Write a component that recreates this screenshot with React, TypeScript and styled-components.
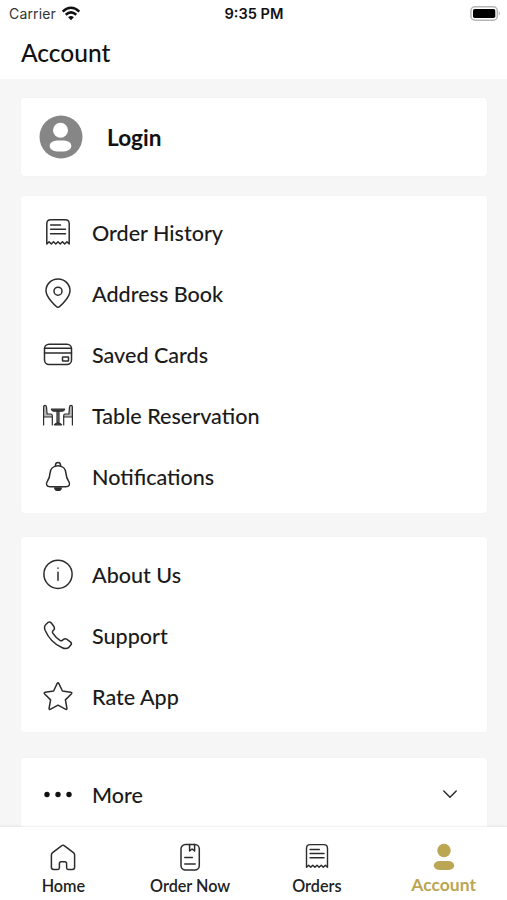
import React from 'react';
import styled, { createGlobalStyle } from 'styled-components';

const GlobalStyle = createGlobalStyle`
  *, *::before, *::after { box-sizing: border-box; }
  body { margin: 0; background: #f6f6f6; font-family: Lato, "Liberation Sans", sans-serif; color: #1b1b1b; }
`;

const Screen = styled.div`
  width: 507px;
  height: 900px;
  display: flex;
  flex-direction: column;
  overflow: hidden;
  background: #f6f6f6;
`;

const StatusBar = styled.div`
  display: grid;
  grid-template-columns: 1fr auto 1fr;
  align-items: center;
  height: 27px;
  flex: none;
  padding: 0 6px 0 9px;
  background: #fff;
  font-family: Inter, "Liberation Sans", sans-serif;
`;

const Carrier = styled.div`
  display: flex;
  align-items: center;
  gap: 5px;
  font-size: 14px;
  letter-spacing: 0.15px;
  color: #333;
`;

const Clock = styled.div`
  margin-right: 2px;
  font-size: 14.6px;
  font-weight: 600;
  color: #111;
`;

const BatterySlot = styled.div`
  display: flex;
  justify-content: flex-end;
`;

const Header = styled.header`
  flex: none;
  height: 52px;
  padding: 9px 21px 0;
  background: #fff;
`;

const Title = styled.h1`
  margin: 0;
  font-size: 24.5px;
  line-height: 34px;
  font-weight: 500;
  color: #111;
`;

const Content = styled.main`
  flex: 1;
  min-height: 0;
  overflow: hidden;
  padding: 19px 20px 0 21px;
`;

const Card = styled.section<{ $pad: string; $gap: number }>`
  padding: ${(p) => p.$pad};
  margin-bottom: ${(p) => p.$gap}px;
  background: #fff;
  border-radius: 4px;
  box-shadow: 0 0 3px rgba(0, 0, 0, 0.025);
`;

const LoginRow = styled.div`
  display: flex;
  align-items: center;
  gap: 24px;
  height: 78px;
  padding-left: 18px;
`;

const LoginLabel = styled.span`
  padding-top: 2px;
  font-size: 22.6px;
  font-weight: 700;
  line-height: 30px;
  color: #111;
`;

const Row = styled.div`
  display: flex;
  align-items: center;
  height: 61px;
  padding: 0 29px 0 21px;
`;

const RowLabel = styled.span`
  flex: 1;
  margin-left: 18px;
  font-size: 21.55px;
  font-weight: 500;
  line-height: 30px;
`;

const Icon = styled.svg`
  display: block;
  flex: none;
  overflow: visible;
  fill: none;
  stroke: #2c2c2c;
  stroke-width: 1.5;
  stroke-linecap: round;
  stroke-linejoin: round;
`;

const TabBar = styled.nav`
  flex: none;
  display: grid;
  grid-template-columns: repeat(4, 1fr);
  height: 73px;
  background: #fff;
  box-shadow: 0 -1px 2px rgba(0, 0, 0, 0.07);
`;

const Tab = styled.div<{ $active?: boolean }>`
  display: flex;
  flex-direction: column;
  align-items: center;
  padding-top: 14px;
  font-size: ${(p) => (p.$active ? 17.5 : 16.2)}px;
  font-weight: ${(p) => (p.$active ? 700 : 600)};
  line-height: 20px;
  color: ${(p) => (p.$active ? '#baa653' : '#222')};
`;

const TabIcon = styled.div`
  display: flex;
  align-items: center;
  justify-content: center;
  height: 32px;
`;

const TabLabel = styled.span<{ $active?: boolean }>`
  margin-top: ${(p) => (p.$active ? 2 : 3)}px;
`;

const Receipt = ({ size = 32 }: { size?: number }) => (
  <Icon width={size} height={size} viewBox="0 0 32 32">
    <path d="M4.8 27V6.8Q4.8 2.8 8.8 2.8H23.2Q27.2 2.8 27.2 6.8V27L24.9 24.7L22.7 27L20.5 24.7L18.2 27L16 24.7L13.8 27L11.5 24.7L9.3 27L7.1 24.7Z" />
    <path d="M8.6 8H18.5M8.6 12.3H23.5M8.6 16.8H23.5" />
  </Icon>
);

const Pin = () => (
  <Icon width="32" height="32" viewBox="0 0 32 32">
    <path d="M16 29.3C14.5 29.3 4 19.5 4 12.7A12 11.8 0 0 1 28 12.7C28 19.5 17.5 29.3 16 29.3Z" />
    <circle cx="16" cy="13.2" r="4" />
  </Icon>
);

const CreditCard = () => (
  <Icon width="32" height="32" viewBox="0 0 32 32">
    <rect x="2.5" y="5.2" width="27" height="20.4" rx="4.5" />
    <path d="M2.5 9.3H29.5M2.5 14H29.5" />
    <rect x="20.5" y="18" width="6" height="4" rx="0.5" />
  </Icon>
);

const TableChairs = () => (
  <Icon width="32" height="32" viewBox="0 0 32 32">
    <g strokeWidth="1.2">
      <path d="M1.6 17V7Q1.6 5.4 3 5.4Q4.3 5.4 4.5 7L5.1 14H8.8Q10.3 14 10.3 15.8V17Z" fill="#bbb" />
      <path d="M1.6 17V25M10.3 17V25" />
      <path d="M30.4 17V7Q30.4 5.4 29 5.4Q27.7 5.4 27.5 7L26.9 14H23.2Q21.7 14 21.7 15.8V17Z" fill="#bbb" />
      <path d="M30.4 17V25M21.7 17V25" />
      <path d="M9.4 9.2H22.6Q22.2 11.2 20.4 11.2H11.6Q9.8 11.2 9.4 9.2Z" fill="#444" />
      <path d="M15 11.5H17V22.8H15Z" fill="#888" />
      <path d="M12.4 24.8Q13.5 23 16 23Q18.5 23 19.6 24.8Z" fill="#444" />
    </g>
  </Icon>
);

const Bell = () => (
  <Icon width="32" height="32" viewBox="0 0 32 32">
    <path d="M13.5 5.3V3.9Q13.7 1.6 16 1.6Q18.3 1.6 18.5 3.9V5.3" />
    <path d="M16 4.8C10.9 4.8 8.2 8.4 8 12.4C7.7 17.2 6.9 18.2 5.3 20.4C3.4 23.3 4.6 25.6 8.3 25.7H23.7C27.4 25.6 28.6 23.3 26.7 20.4C25.1 18.2 24.3 17.2 24 12.4C23.8 8.4 21.1 4.8 16 4.8Z" />
    <path d="M12.8 27H19.2Q18.7 29.3 16 29.3Q13.3 29.3 12.8 27Z" fill="#222" />
  </Icon>
);

const Info = () => (
  <Icon width="32" height="32" viewBox="0 0 32 32">
    <circle cx="16" cy="15.3" r="14.1" />
    <path d="M16 13.2V21.3M16 9V9.3" />
  </Icon>
);

const Phone = () => (
  <Icon width="32" height="32" viewBox="0 0 32 32">
    <path d="M4.1 4.2L6 2.5Q7.8 1.2 9.3 3L12.1 6.8Q13 8.5 11.7 10L10.7 11.1Q10.1 12 10.8 13.2Q13.6 17.7 18.3 20.6Q19.4 21.2 20.3 20.4L21.5 19.4Q23 18.2 24.6 19.2L28.4 21.9Q30.2 23.4 28.8 25.1L27.1 27.1Q24.4 29.6 20.3 27.7Q8.5 22.7 3.1 10.2Q1.6 6.4 4.1 4.2Z" />
  </Icon>
);

const Star = () => (
  <Icon width="32" height="32" viewBox="0 0 32 32">
    <path d="M15.1 2.6Q16 .9 16.9 2.6L20.4 10L28.7 11.2Q30.6 11.6 29.3 13L23.4 18.9L24.9 27.2Q25.1 29.1 23.4 28.2L16 24.2L8.6 28.2Q6.9 29.1 7.1 27.2L8.6 18.9L2.7 13Q1.4 11.6 3.3 11.2L11.6 10Z" />
  </Icon>
);

const Dots = () => (
  <Icon width="32" height="32" viewBox="0 0 32 32">
    <g fill="#111" stroke="none">
      <circle cx="5" cy="15.5" r="2.7" />
      <circle cx="16" cy="15.5" r="2.7" />
      <circle cx="27" cy="15.5" r="2.7" />
    </g>
  </Icon>
);

const Chevron = () => (
  <Icon width="16" height="16" viewBox="0 0 16 16">
    <path d="M1.8 4L8 10.3L14.2 4" />
  </Icon>
);

const Home = () => (
  <Icon width="32" height="32" viewBox="0 0 32 32">
    <path d="M16 4.2Q16.8 4.2 17.5 4.8L26.4 11.6Q27.6 12.6 27.6 14V26.2Q27.6 28.4 25.4 28.4H21.2Q19.6 28.4 19.6 26.8V22.8Q19.6 20.8 17.8 20.8H14.2Q12.4 20.8 12.4 22.8V26.8Q12.4 28.4 10.8 28.4H6.6Q4.4 28.4 4.4 26.2V14Q4.4 12.6 5.6 11.6L14.5 4.8Q15.2 4.2 16 4.2Z" />
  </Icon>
);

const Menu = () => (
  <Icon width="32" height="32" viewBox="0 0 32 32">
    <rect x="7" y="3.5" width="18.3" height="25.6" rx="4.5" />
    <path d="M15.6 3.6V10L18.1 8L20.6 10V3.6M10.8 16.6H18.4M10.8 23H21.2" />
  </Icon>
);

const Person = () => (
  <Icon width="32" height="32" viewBox="0 0 32 32">
    <g fill="#baa653" stroke="none">
      <circle cx="16" cy="9.5" r="6.7" />
      <rect x="5.8" y="20" width="20.4" height="9" rx="6" ry="4.5" />
    </g>
  </Icon>
);

const Avatar = () => (
  <Icon width="44" height="44" viewBox="0 0 44 44">
    <g stroke="none">
      <circle cx="22" cy="22" r="21.5" fill="#868686" />
      <circle cx="21.5" cy="15.3" r="7.5" fill="#fff" />
      <rect x="10.6" y="25.4" width="21.8" height="11" rx="7.5" ry="5.5" fill="#fff" />
    </g>
  </Icon>
);

const Wifi = () => (
  <svg width="20" height="15" viewBox="0 0 20 15" fill="none" stroke="#111" strokeWidth="2.5">
    <path d="M1.7 5.6Q10 -2 18.3 5.6M4.7 8.8Q10 4 15.3 8.8" />
    <path d="M10 14.2L7.1 11.3Q10 8.9 12.9 11.3Z" fill="#111" stroke="none" />
  </svg>
);

const Battery = () => (
  <svg width="31" height="15" viewBox="0 0 31 15">
    <rect x="0.9" y="0.8" width="26.4" height="13.4" rx="4" fill="#fff" stroke="#b5b5b5" strokeWidth="1.5" />
    <rect x="3" y="2.9" width="22.3" height="9.2" rx="1.8" fill="#000" />
    <path d="M28.8 5Q31 7.4 28.8 9.8Z" fill="#b5b5b5" />
  </svg>
);

const orderItems = [
  { label: 'Order History', icon: <Receipt /> },
  { label: 'Address Book', icon: <Pin /> },
  { label: 'Saved Cards', icon: <CreditCard /> },
  { label: 'Table Reservation', icon: <TableChairs /> },
  { label: 'Notifications', icon: <Bell /> },
];

const infoItems = [
  { label: 'About Us', icon: <Info /> },
  { label: 'Support', icon: <Phone /> },
  { label: 'Rate App', icon: <Star /> },
];

const tabs = [
  { label: 'Home', icon: <Home /> },
  { label: 'Order Now', icon: <Menu /> },
  { label: 'Orders', icon: <Receipt size={30} /> },
  { label: 'Account', icon: <Person />, active: true },
];

export default function App() {
  return (
    <Screen>
      <GlobalStyle />
      <StatusBar>
        <Carrier>Carrier <Wifi /></Carrier>
        <Clock>9:35 PM</Clock>
        <BatterySlot><Battery /></BatterySlot>
      </StatusBar>
      <Header><Title>Account</Title></Header>
      <Content>
        <Card $pad="0" $gap={20}>
          <LoginRow><Avatar /><LoginLabel>Login</LoginLabel></LoginRow>
        </Card>
        <Card $pad="6px 0 6px" $gap={24}>
          {orderItems.map((i) => (
            <Row key={i.label}>{i.icon}<RowLabel>{i.label}</RowLabel></Row>
          ))}
        </Card>
        <Card $pad="7px 0 5px" $gap={26}>
          {infoItems.map((i) => (
            <Row key={i.label}>{i.icon}<RowLabel>{i.label}</RowLabel></Row>
          ))}
        </Card>
        <Card $pad="6px 0 10px" $gap={0}>
          <Row><Dots /><RowLabel>More</RowLabel><Chevron /></Row>
        </Card>
      </Content>
      <TabBar>
        {tabs.map((t) => (
          <Tab key={t.label} $active={t.active}>
            <TabIcon>{t.icon}</TabIcon>
            <TabLabel $active={t.active}>{t.label}</TabLabel>
          </Tab>
        ))}
      </TabBar>
    </Screen>
  );
}
